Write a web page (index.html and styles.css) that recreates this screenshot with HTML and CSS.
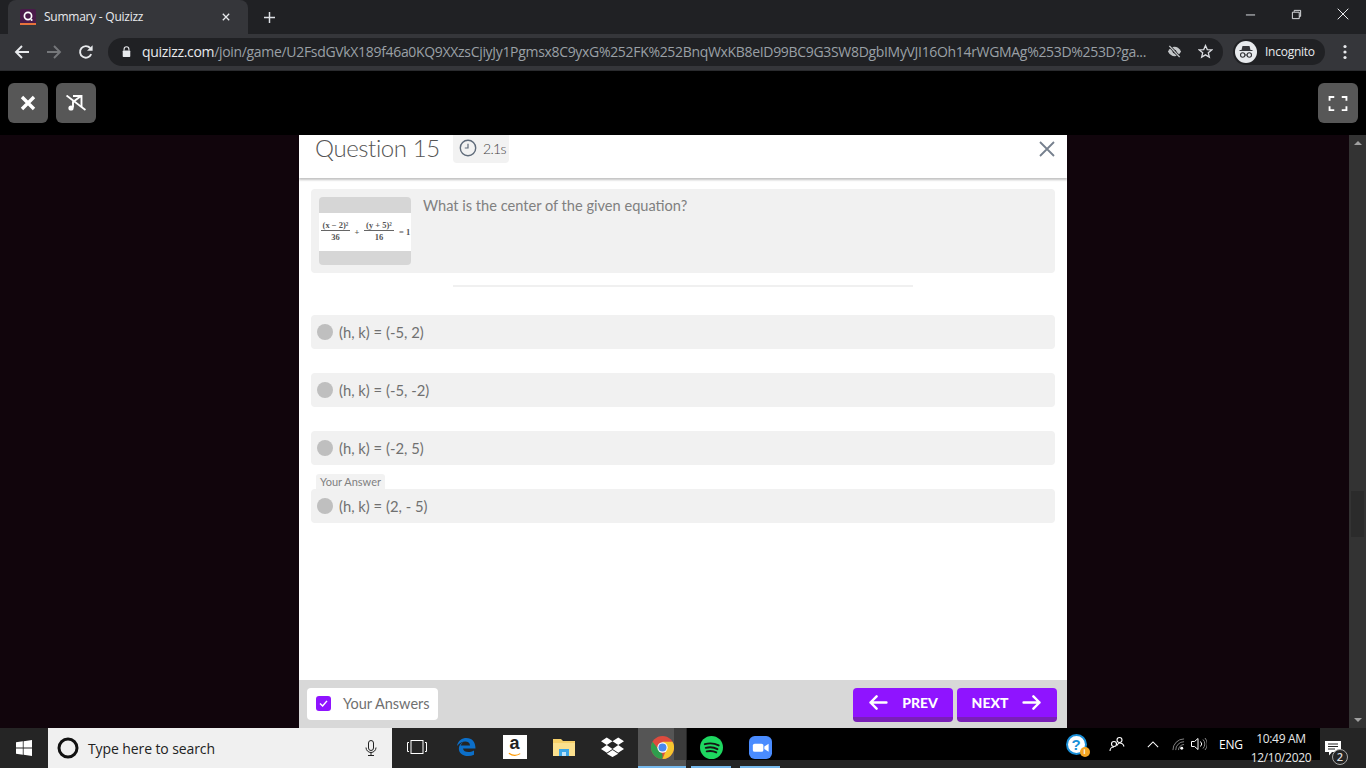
FILE: index.html
```html
<!DOCTYPE html>
<html lang="en">
<head>
<meta charset="utf-8">
<title>Summary - Quizizz</title>
<link rel="stylesheet" href="styles.css">
</head>
<body>
<div class="screen">
  <div class="tabstrip">
    <div class="tab">
      <svg class="favicon" viewBox="0 0 16 16"><rect width="16" height="16" rx="2" fill="#4a1a4a"/><rect y="14" width="16" height="2" fill="#e8743b"/><circle cx="8" cy="7" r="3.6" fill="none" stroke="#fff" stroke-width="1.7"/><circle cx="11.6" cy="11" r="1" fill="#fff"/></svg>
      <span class="tab-title">Summary - Quizizz</span>
      <svg class="tab-close" viewBox="0 0 10 10"><path d="M1 1l8 8M9 1l-8 8" stroke="#e8eaed" stroke-width="1.6"/></svg>
    </div>
    <svg class="newtab" viewBox="0 0 12 12"><path d="M6 0v12M0 6h12" stroke="#dee1e6" stroke-width="1.6"/></svg>
    <div class="winbtns">
      <svg class="winbtn" viewBox="0 0 12 12"><path d="M1 6.5h10" stroke="#e8eaed" stroke-width="1"/></svg>
      <svg class="winbtn" viewBox="0 0 12 12"><path d="M3.5 3V1.5h7V8H9M1.500 3.500H9v7H1.500z" fill="none" stroke="#e8eaed" stroke-width="1"/></svg>
      <svg class="winbtn winbtn-x" viewBox="0 0 12 12"><path d="M.7.7l10.6 10.6M11.3.7L.7 11.3" stroke="#e8eaed" stroke-width="1"/></svg>
    </div>
  </div>
  <div class="toolbar">
    <svg class="nav" viewBox="0 0 16 16"><path d="M15 8H2M8 2L2 8l6 6" fill="none" stroke="#e8eaed" stroke-width="1.9"/></svg>
    <svg class="nav" viewBox="0 0 16 16"><path d="M1 8h13M8 2l6 6-6 6" fill="none" stroke="#75777a" stroke-width="1.9"/></svg>
    <svg class="nav" viewBox="0 0 16 16"><path d="M13.200 10.200A5.800 5.800 0 1 1 12.200 4" fill="none" stroke="#e8eaed" stroke-width="1.9"/><path d="M14.600 1.200v5.600H9z" fill="#e8eaed"/></svg>
    <div class="omnibox">
      <svg class="lock" viewBox="0 0 10 12"><path d="M2.300 5V3.400a2.700 2.700 0 0 1 5.400 0V5" fill="none" stroke="#e8eaed" stroke-width="1.2"/><rect x=".8" y="5" width="8.400" height="7" rx=".8" fill="#e8eaed"/></svg>
      <span class="url"><span class="url-host">quizizz.com</span>/join/game/U2FsdGVkX189f46a0KQ9XXzsCjiyJy1Pgmsx8C9yxG%252FK%252BnqWxKB8eID99BC9G3SW8DgbIMyVJI16Oh14rWGMAg%253D%253D?ga...</span>
      <svg class="omni-icon omni-eye" viewBox="0 0 16 14"><path d="M1 7c2-3.600 4.400-5 7-5s5 1.400 7 5c-2 3.600-4.400 5-7 5s-5-1.400-7-5z" fill="#c4c7c9"/><circle cx="8" cy="7" r="2" fill="#202124"/><path d="M2.500 1l11 12" stroke="#202124" stroke-width="3"/><path d="M2.500 1l11 12" stroke="#c4c7c9" stroke-width="1.500"/></svg>
      <svg class="omni-icon omni-star" viewBox="0 0 16 16"><path d="M8 1.600l1.900 4.300 4.700.4-3.600 3.100 1.100 4.600L8 11.600l-4.100 2.400L5 9.400 1.400 6.300l4.700-.4z" fill="none" stroke="#dadce0" stroke-width="1.400"/></svg>
    </div>
    <div class="profile">
      <svg class="avatar" viewBox="0 0 22 22"><circle cx="11" cy="11" r="11" fill="#e8eaed"/><path d="M7.500 5h7l1 4h2v1H4.500V9h2z" fill="#35363a"/><circle cx="7.700" cy="14" r="2.200" fill="none" stroke="#35363a" stroke-width="1.100"/><circle cx="14.300" cy="14" r="2.200" fill="none" stroke="#35363a" stroke-width="1.100"/><path d="M9.900 14h2.200" stroke="#35363a"/></svg>
      <span class="profile-name">Incognito</span>
    </div>
    <svg class="kebab" viewBox="0 0 4 16"><circle cx="2" cy="2.500" r="1.600" fill="#e8eaed"/><circle cx="2" cy="8" r="1.600" fill="#e8eaed"/><circle cx="2" cy="13.500" r="1.600" fill="#e8eaed"/></svg>
  </div>
  <div class="gamebar">
    <div class="gamebtn"><svg class="ic-close" viewBox="0 0 16 16"><path d="M2 2l12 12M14 2L2 14" stroke="#fff" stroke-width="3.400"/></svg></div>
    <div class="gamebtn"><svg class="ic-mute" viewBox="0 0 20 16"><path d="M7 1h8.500v11M15 1L7 7v5.500" fill="none" stroke="#fff" stroke-width="1.900"/><circle cx="5" cy="13" r="2.600" fill="#fff"/><path d="M.5.500l19 14.500" stroke="#fff" stroke-width="1.900"/></svg></div>
    <div class="spacer"></div>
    <div class="gamebtn"><svg class="ic-full" viewBox="0 0 20 16"><path d="M6 1H1v4M14 1h5v4M6 15H1v-4M14 15h5v-4" fill="none" stroke="#fff" stroke-width="2"/></svg></div>
  </div>
  <div class="stage">
    <div class="panel">
      <div class="panel-head">
        <h1 class="qtitle">Question 15</h1>
        <div class="timepill">
          <svg class="clock" viewBox="0 0 18 18"><circle cx="9" cy="9" r="7.700" fill="none" stroke="#5f6b7a" stroke-width="1.400"/><path d="M9 4.800V9H5.800" fill="none" stroke="#5f6b7a" stroke-width="1.200"/></svg>
          <span class="timetext">2.1s</span>
        </div>
        <svg class="panel-close" viewBox="0 0 16 16"><path d="M1 1l14 14M15 1L1 15" stroke="#76808e" stroke-width="1.800"/></svg>
      </div>
      <div class="panel-body">
        <div class="question">
          <div class="qimage">
            <div class="equation">
              <span class="frac"><span class="num">(x − 2)²</span><span>36</span></span>
              <span class="op">+</span>
              <span class="frac frac-wide"><span class="num">(y + 5)²</span><span>16</span></span>
              <span class="op eq">= 1</span>
            </div>
          </div>
          <p class="qtext">What is the center of the given equation?</p>
        </div>
        <div class="divider"></div>
        <div class="options">
          <div class="option"><span class="radio"></span><span>(h, k) = (-5, 2)</span></div>
          <div class="option"><span class="radio"></span><span>(h, k) = (-5, -2)</span></div>
          <div class="option"><span class="radio"></span><span>(h, k) = (-2, 5)</span></div>
          <div class="option option-mine">
            <span class="yourtag">Your Answer</span>
            <span class="radio"></span><span>(h, k) = (2, - 5)</span>
          </div>
        </div>
      </div>
      <div class="panel-foot">
        <div class="answers-toggle">
          <span class="check"><svg viewBox="0 0 10 8"><path d="M1 4l3 2.800L9 1" fill="none" stroke="#fff" stroke-width="1.700"/></svg></span>
          <span>Your Answers</span>
        </div>
        <div class="spacer"></div>
        <div class="navbtn">
          <svg class="arrow" viewBox="0 0 20 16"><path d="M19 8H2M8.500 1.500L2 8l6.500 6.500" fill="none" stroke="#fff" stroke-width="2.600" stroke-linecap="round" stroke-linejoin="round"/></svg>
          <span>PREV</span>
        </div>
        <div class="navbtn">
          <span>NEXT</span>
          <svg class="arrow" viewBox="0 0 20 16"><path d="M1 8h17M11.500 1.500L18 8l-6.500 6.500" fill="none" stroke="#fff" stroke-width="2.600" stroke-linecap="round" stroke-linejoin="round"/></svg>
        </div>
      </div>
    </div>
    <div class="scrollbar">
      <span class="tri-up"></span>
      <span class="thumb"></span>
      <span class="tri-down"></span>
    </div>
  </div>
  <div class="taskbar">
    <div class="tb-overlay"></div>
    <div class="tb-start"><svg viewBox="0 0 16 16"><path d="M0 2.300L6.800 1.300V7.600H0zM7.600 1.200L16 0V7.600H7.600zM0 8.400H6.800V14.700L0 13.700zM7.600 8.400H16V16L7.600 14.800z" fill="#fff"/></svg></div>
    <div class="tb-search">
      <svg class="cortana" viewBox="0 0 22 22"><circle cx="11" cy="11" r="9" fill="none" stroke="#111" stroke-width="3"/></svg>
      <span class="search-text">Type here to search</span>
      <svg class="mic" viewBox="0 0 12 16"><rect x="3.500" y=".5" width="5" height="10" rx="2.500" fill="none" stroke="#222"/><path d="M1 7.500a5 5 0 0 0 10 0M6 12.500V15M3 15.500h6" fill="none" stroke="#222"/></svg>
    </div>
    <div class="tb-apps">
      <div class="app"><svg class="i-taskview" viewBox="0 0 20 14"><rect x="4" y=".5" width="12" height="13" fill="none" stroke="#fff"/><path d="M2 2.500H.5v9H2M18 2.500h1.500v9H18" fill="none" stroke="#fff"/></svg></div>
      <div class="app"><svg class="i-edge" viewBox="0 0 20 20"><path d="M1 9C2 3.500 6 1 10.500 1 16 1 19.500 5 19.500 11.500H7c.3 3.500 5.800 5 11 2v4.300C11 21 1.500 18 3 10c.6-2 2-4 5-5.500-2 1.500-3 3-3.300 4h9.300c0-5-8-6-13 .5z" fill="#0c6fc9"/></svg></div>
      <div class="app"><div class="amazon"><span class="amazon-a">a</span><svg viewBox="0 0 16 5"><path d="M1 1c4 3 9 3 13 .5" fill="none" stroke="#f90" stroke-width="1.300"/></svg></div></div>
      <div class="app"><svg class="i-folder" viewBox="0 0 22 18"><path d="M0 1h8l2 2h12v15H0z" fill="#f6d06a"/><path d="M0 5h22v13H0z" fill="#fbe08e"/><path d="M6 11h10v7H6z" fill="#3aa6e8"/><path d="M9 14h4v4H9z" fill="#bfe4f8"/></svg></div>
      <div class="app"><svg class="i-dropbox" viewBox="0 0 24 20"><path d="M6 0l6 4-6 4-6-4zM18 0l6 4-6 4-6-4zM6 8l6 4-6 4-6-4zM18 8l6 4-6 4-6-4zM12 13l6 4-6 3.500-6-3.500z" fill="#fff"/></svg></div>
      <div class="app app-active"><svg class="i-chrome" viewBox="0 0 24 24"><circle cx="12" cy="12" r="12" fill="#dd4b3e"/><path d="M12 24a12 12 0 0 1-10.400-18L8 14l4 5z" fill="#2f9e4d"/><path d="M12 24a12 12 0 0 0 10.400-18H12l4 8z" fill="#f6c62f"/><circle cx="12" cy="12" r="5.400" fill="#fff"/><circle cx="12" cy="12" r="4.200" fill="#4a88ee"/></svg></div>
      <div class="app app-open"><svg class="i-spotify" viewBox="0 0 24 24"><circle cx="12" cy="12" r="12" fill="#1ed760"/><path d="M5 8.500c5-1.400 10-1 14.500 1.300M6 12.400c4.500-1.100 8.500-.7 12.200 1.300M7 16c3.600-.8 7-.5 10 1.100" fill="none" stroke="#151515" stroke-width="2" stroke-linecap="round"/></svg></div>
      <div class="app app-open"><svg class="i-zoom" viewBox="0 0 24 24"><rect width="24" height="24" rx="6" fill="#4a8cff"/><rect x="4" y="8" width="11" height="8.500" rx="2" fill="#fff"/><path d="M16 11l4.500-3v8.500L16 13.500z" fill="#fff"/></svg></div>
    </div>
    <div class="spacer"></div>
    <div class="tray">
      <div class="tray-help"><span class="help-q">?</span><span class="help-badge">i</span></div>
      <svg class="i-people" viewBox="0 0 16 16"><circle cx="10.500" cy="4" r="2.500" fill="none" stroke="#fff" stroke-width="1.100"/><circle cx="5" cy="8" r="2.500" fill="none" stroke="#fff" stroke-width="1.100"/><path d="M1 15c0-2 1.600-4 4-4M8 9.500c.7-1.500 1.500-2.500 2.500-2.500 2.200 0 4 1.500 4.500 3.500" fill="none" stroke="#fff" stroke-width="1.100"/></svg>
      <svg class="i-chev" viewBox="0 0 14 8"><path d="M1 7l6-6 6 6" fill="none" stroke="#fff" stroke-width="1.200"/></svg>
      <svg class="i-wifi" viewBox="0 0 14 14"><path d="M1 13A12 12 0 0 1 13 1M4 13A9 9 0 0 1 13 4M7 13a6 6 0 0 1 6-6" fill="none" stroke="#8a8a8a"/><circle cx="10.500" cy="11" r="1.600" fill="#fff"/></svg>
      <svg class="i-vol" viewBox="0 0 16 14"><path d="M.5 4.500h3L7 1.500v11l-3.500-3h-3z" fill="none" stroke="#fff"/><path d="M9.500 4.500a3.500 3.500 0 0 1 0 5" fill="none" stroke="#fff"/><path d="M12 2.500a6.500 6.500 0 0 1 0 9M14 1a9 9 0 0 1 0 12" fill="none" stroke="#888"/></svg>
      <span class="lang">ENG</span>
      <div class="clocktext"><span>10:49 AM</span><span>12/10/2020</span></div>
      <div class="notif">
        <svg class="i-notif" viewBox="0 0 16 15"><path d="M0 0h16v11H7l-3 3.500V11H0z" fill="#fff"/><path d="M3 3h10M3 5.500h10M3 8h7" stroke="#252525"/></svg>
        <span class="notif-count">2</span>
      </div>
    </div>
  </div>
</div>
</body>
</html>
```

FILE: styles.css
```css
* { box-sizing: border-box; }
html, body { margin: 0; padding: 0; background: #000; }
body { width: 1366px; height: 768px; overflow: hidden; font-family: "Open Sans", "Liberation Sans", sans-serif; }
svg { display: block; flex: none; }
.screen { width: 1366px; height: 768px; display: flex; flex-direction: column; }
.spacer { flex: 1; }

/* Browser chrome */
.tabstrip { height: 34px; background: #202124; display: flex; align-items: flex-end; padding-left: 8px; }
.tab { width: 240px; height: 34px; background: #35363a; border-radius: 8px 8px 0 0; display: flex; align-items: center; padding-left: 12px; }
.favicon { width: 16px; height: 16px; }
.tab-title { margin: 0 0 2px 8px; font-size: 12px; letter-spacing: -.25px; color: #e8eaed; width: 178px; white-space: nowrap; }
.tab-close { width: 8px; height: 8px; }
.newtab { width: 11px; height: 11px; margin: 0 0 11px 16px; }
.winbtns { margin-left: auto; height: 34px; display: flex; align-items: center; padding-bottom: 6px; }
.winbtn { width: 11px; height: 11px; margin-right: 35px; }
.winbtn-x { width: 12px; height: 12px; margin-right: 17px; }
.toolbar { height: 37px; background: #35363a; border-bottom: 1px solid #2a2b2e; display: flex; align-items: center; padding-left: 14px; padding-bottom: 1px; }
.nav { width: 16px; height: 16px; margin-right: 16px; }
.omnibox { margin-left: -2px; width: 1115px; height: 28px; background: #202124; border-radius: 14px; display: flex; align-items: center; padding-left: 14px; }
.lock { width: 9px; height: 11px; }
.url { margin-left: 11px; width: 1010px; font-size: 14px; letter-spacing: -.32px; color: #9aa0a6; white-space: nowrap; overflow: hidden; }
.url-host { color: #e8eaed; }
.omni-icon { width: 15px; height: 15px; }
.omni-eye { margin-left: 15px; }
.omni-star { margin-left: 16px; }
.profile { margin-left: 10px; width: 92px; height: 26px; background: #202124; border-radius: 13px; display: flex; align-items: center; padding-left: 2px; }
.avatar { width: 22px; height: 22px; }
.profile-name { margin-left: 8px; font-size: 12px; letter-spacing: -.25px; color: #e8eaed; }
.kebab { width: 4px; height: 16px; margin-left: 18px; }

/* Game top bar */
.gamebar { height: 64px; background: #000; display: flex; align-items: center; padding: 0 8px; gap: 8px; }
.gamebtn { width: 40px; height: 40px; background: #575757; border-radius: 6px; display: flex; align-items: center; justify-content: center; }
.ic-close { width: 16px; height: 16px; }
.ic-mute { width: 20px; height: 16px; }
.ic-full { width: 20px; height: 15px; }

/* Stage */
.stage { position: relative; height: 593px; background: #11050c; display: flex; justify-content: center; }
.panel { width: 768px; height: 593px; background: #fff; display: flex; flex-direction: column; }
.panel-head { height: 43px; flex: none; display: flex; align-items: flex-start; padding-left: 16px; box-shadow: 0 2px 2px rgba(0,0,0,.24); position: relative; }
.qtitle { margin: 0; width: 125px; font-family: "Lato", sans-serif; font-weight: 300; font-size: 24px; letter-spacing: -.4px; line-height: 26px; color: #555; white-space: nowrap; }
.timepill { margin-left: 13px; width: 56px; height: 28px; background: #f2f2f2; border-radius: 0 0 4px 4px; display: flex; align-items: center; padding: 0 0 2px 6px; }
.clock { width: 18px; height: 18px; }
.timetext { margin-left: 6px; font-family: "Lato", sans-serif; font-weight: 300; font-size: 14px; letter-spacing: -.7px; color: #444; }
.panel-close { width: 16px; height: 16px; margin: 6px 12px 0 auto; }
.panel-body { flex: 1; padding: 11px 12px 0; display: flex; flex-direction: column; }
.question { height: 84px; background: #f1f1f1; border-radius: 4px; display: flex; padding: 8px; }
.qimage { width: 92px; height: 68px; background: #d6d6d6; border-radius: 4px; display: flex; align-items: center; }
.equation { width: 92px; height: 38px; margin-top: 1px; background: #fff; display: flex; align-items: center; padding-left: 2px; font-family: "Liberation Serif", serif; font-weight: bold; font-size: 8.500px; color: #555; white-space: nowrap; overflow: hidden; }
.frac { display: flex; flex-direction: column; align-items: center; line-height: 9px; width: 29px; flex: none; }
.frac-wide { width: 30px; }
.num { border-bottom: 1px solid #666; width: 100%; text-align: center; margin-bottom: 2px; }
.op { width: 14px; text-align: center; flex: none; }
.eq { width: auto; margin-left: 5px; }
.qtext { margin: 0 0 0 12px; font-family: "Lato", sans-serif; font-size: 14.600px; line-height: 18px; color: #808080; white-space: nowrap; }
.divider { margin: 12px auto 0; width: 460px; height: 2px; background: #f0f0f0; }
.options { margin-top: 28px; display: flex; flex-direction: column; gap: 24px; }
.option { position: relative; height: 34px; background: #f1f1f1; border-radius: 4px; display: flex; align-items: center; padding-left: 6px; gap: 6px; font-family: "Lato", sans-serif; font-size: 14.800px; color: #707070; white-space: nowrap; }
.radio { width: 16px; height: 16px; border-radius: 50%; background: #bfbfbf; }
.yourtag { position: absolute; left: 5px; top: -15px; height: 15px; width: 69px; background: #f2f2f2; border-radius: 3px 3px 0 0; padding-left: 4px; font-size: 11px; line-height: 15px; color: #808080; }
.panel-foot { height: 48px; flex: none; background: #d8d8d8; display: flex; align-items: flex-start; padding: 8px 10px 0 8px; }
.answers-toggle { width: 131px; height: 32px; background: #fff; border-radius: 4px; display: flex; align-items: center; padding: 0 0 1px 9px; gap: 12px; font-family: "Lato", sans-serif; font-size: 14.500px; color: #707070; white-space: nowrap; }
.check { width: 15px; height: 15px; background: #8f14ff; border-radius: 3px; display: flex; align-items: center; justify-content: center; }
.check svg { width: 9px; height: 7px; }
.navbtn { margin-left: 4px; width: 100px; height: 34px; background: #8f14ff; border-radius: 4px; border-bottom: 5px solid #7a1fb8; display: flex; align-items: center; justify-content: center; gap: 14px; font-family: "Lato", sans-serif; font-weight: 900; font-size: 14px; color: #fff; }
.arrow { width: 20px; height: 15px; }

/* Scrollbar */
.scrollbar { position: absolute; right: 0; top: 0; bottom: 0; width: 17px; background: #333; display: flex; flex-direction: column; align-items: center; justify-content: space-between; padding: 6px 0; }
.tri-up { width: 0; height: 0; border: 4px solid transparent; border-top: 0; border-bottom: 4px solid #a0a0a0; }
.tri-down { width: 0; height: 0; border: 4px solid transparent; border-bottom: 0; border-top: 4px solid #a0a0a0; }
.thumb { width: 13px; height: 46px; background: #2b2b2b; margin-top: 164px; }

/* Taskbar */
.taskbar { position: relative; height: 40px; background: #252525; display: flex; align-items: stretch; }
.tb-overlay { position: absolute; left: 687px; top: 0; width: 633px; height: 32px; background: #000; }
.tb-start { width: 48px; display: flex; align-items: center; justify-content: center; }
.tb-start svg { width: 16px; height: 16px; }
.tb-search { width: 344px; background: #f0f0f0; display: flex; align-items: center; padding-left: 9px; }
.cortana { width: 22px; height: 22px; }
.search-text { margin-left: 9px; font-size: 14px; letter-spacing: -.1px; color: #222; width: 274px; white-space: nowrap; }
.mic { width: 12px; height: 16px; margin-left: 3px; }
.tb-apps { position: relative; display: flex; }
.app { width: 49px; display: flex; align-items: center; justify-content: center; padding-bottom: 2px; }
.app-active { position: relative; width: 48px; margin: 0 1px; background: #555; border-bottom: 2px solid #76b9ed; padding: 0; }
.app-active::after { content: ""; position: absolute; right: 0; top: 0; width: 12px; height: 32px; background: rgba(0,0,0,.3); }
.app-active svg { position: relative; z-index: 1; }
.app-open { position: relative; }
.app-open::after { content: ""; position: absolute; left: 4px; right: 5px; bottom: 0; height: 2px; background: #76b9ed; }
.i-taskview { width: 20px; height: 14px; }
.i-edge { width: 20px; height: 24px; }
.amazon { width: 24px; height: 24px; background: #fff; display: flex; flex-direction: column; align-items: center; font-family: "Liberation Sans", sans-serif; font-weight: bold; font-size: 18px; line-height: 17px; color: #222; }
.amazon svg { width: 14px; height: 5px; }
.i-folder { width: 22px; height: 18px; }
.i-dropbox { width: 23px; height: 20px; }
.i-chrome, .i-spotify, .i-zoom { width: 23px; height: 23px; }
.tray { display: flex; align-items: center; height: 32px; position: relative; color: #fff; }
.tray-help { position: relative; width: 21px; height: 21px; border-radius: 50%; background: #fff; border: 2px solid #1a8fd8; text-align: center; font-family: "Liberation Sans", sans-serif; font-weight: bold; font-size: 15px; line-height: 17px; color: #1a8fd8; }
.help-badge { position: absolute; right: -5px; bottom: -4px; width: 10px; height: 10px; border-radius: 50%; background: #f5a623; font-size: 7px; line-height: 10px; color: #fff; }
.i-people { width: 16px; height: 16px; margin-left: 22.500px; }
.i-chev { width: 12px; height: 7px; margin-left: 22px; }
.i-wifi { width: 13px; height: 13px; margin-left: 12.500px; }
.i-vol { width: 16px; height: 14px; margin-left: 6.500px; }
.lang { margin-left: 12px; width: 24px; font-size: 12px; letter-spacing: -.2px; white-space: nowrap; }
.clocktext { margin: 8px 0 0 4px; width: 68px; display: flex; flex-direction: column; align-items: center; font-size: 12px; letter-spacing: -.3px; line-height: 19px; color: #e8e8e8; }
.notif { position: relative; margin: 8px 25px 0 10px; width: 16px; height: 15px; }
.i-notif { width: 16px; height: 15px; }
.notif-count { position: absolute; left: 7px; top: 8px; width: 16px; height: 16px; border-radius: 50%; background: #252525; border: 1px solid #aaa; font-size: 11px; font-weight: 600; line-height: 14px; text-align: center; color: #ddd; }
```
